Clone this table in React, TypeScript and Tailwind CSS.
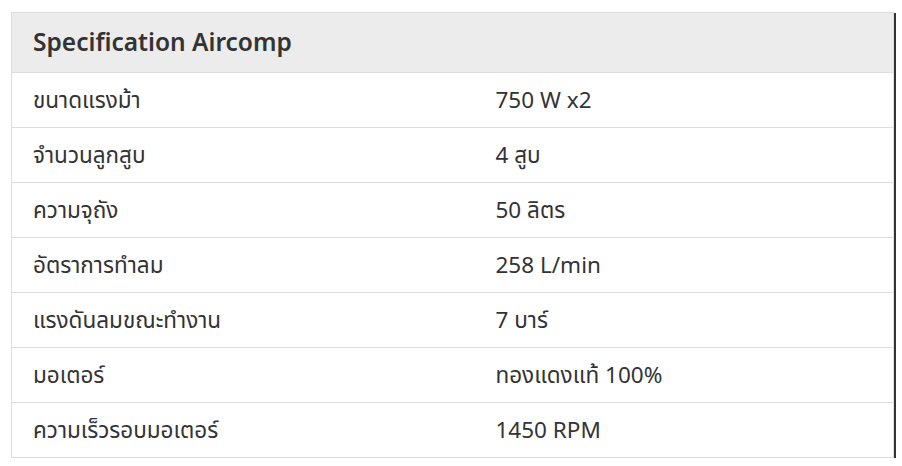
import React from "react";

type Spec = {
  label: string;
  value: string;
};

const specs: Spec[] = [
  { label: "ขนาดแรงม้า", value: "750 W x2" },
  { label: "จำนวนลูกสูบ", value: "4 สูบ" },
  { label: "ความจุถัง", value: "50 ลิตร" },
  { label: "อัตราการทำลม", value: "258 L/min" },
  { label: "แรงดันลมขณะทำงาน", value: "7 บาร์" },
  { label: "มอเตอร์", value: "ทองแดงแท้ 100%" },
  { label: "ความเร็วรอบมอเตอร์", value: "1450 RPM" },
];

export default function App() {
  return (
    <div
      className="w-[902px] h-[466px] bg-white pt-[12px] pl-[11px]"
      style={{ fontFamily: '"Noto Sans", "Noto Sans Thai", sans-serif' }}
    >
      <div className="flex">
        <table className="w-[883px] border-collapse text-[#333] table-fixed">
          <colgroup>
            <col className="w-[463px]" />
            <col />
          </colgroup>
          <thead>
            <tr className="bg-[#ececec]">
              <th
                colSpan={2}
                className="h-[60px] border border-[#dddddd] px-[21px] text-left text-[24.5px] font-semibold"
              >
                Specification Aircomp
              </th>
            </tr>
          </thead>
          <tbody>
            {specs.map((s) => (
              <tr key={s.label}>
                <td className="h-[55px] border-l border-b border-[#dddddd] px-[21px] pb-[1px] text-[22.5px]">
                  {s.label}
                </td>
                <td className="h-[55px] border-r border-b border-[#dddddd] px-[21px] pb-[1px] text-[22.5px]">
                  {s.value}
                </td>
              </tr>
            ))}
          </tbody>
        </table>
        <div className="w-[2px] mt-[1px] h-[445px] bg-[#333]" />
      </div>
    </div>
  );
}
